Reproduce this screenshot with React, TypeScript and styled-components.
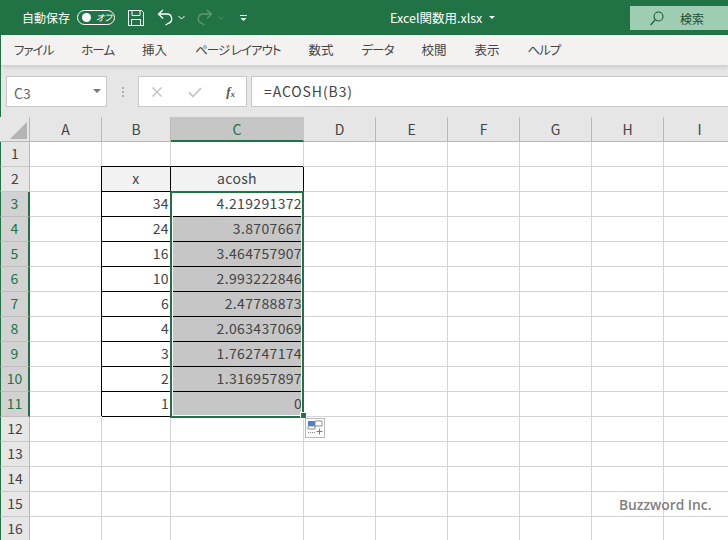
import React from 'react'
import styled, { createGlobalStyle } from 'styled-components'

const GlobalStyle = createGlobalStyle`
    html, body {
        margin: 0;
        padding: 0;
        overflow: hidden;
        background: #fff;
    }
`

const uiFont = `"Noto Sans CJK JP", "Noto Sans", sans-serif`

const columns = ['A', 'B', 'C', 'D', 'E', 'F', 'G', 'H', 'I']
const menus = [
    { label: 'ファイル', kana: true },
    { label: 'ホーム', kana: true },
    { label: '挿入', kana: false },
    { label: 'ページ レイアウト', kana: true },
    { label: '数式', kana: false },
    { label: 'データ', kana: true },
    { label: '校閲', kana: false },
    { label: '表示', kana: false },
    { label: 'ヘルプ', kana: true },
]
const values: [string, string][] = [
    ['34', '4.219291372'],
    ['24', '3.8707667'],
    ['16', '3.464757907'],
    ['10', '2.993222846'],
    ['6', '2.47788873'],
    ['4', '2.063437069'],
    ['3', '1.762747174'],
    ['2', '1.316957897'],
    ['1', '0'],
]

const cellText = (row: number, col: number) => {
    if (row === 2 && col === 1) return 'x'
    if (row === 2 && col === 2) return 'acosh'
    if (row >= 3 && row <= 11 && col === 1) return values[row - 3][0]
    if (row >= 3 && row <= 11 && col === 2) return values[row - 3][1]
    return ''
}

const App = () => {
    const rows = Array.from({ length: 16 }, (_, i) => i + 1)

    return (
        <Page>
            <GlobalStyle />
            <TitleBar>
                <AutoSave>自動保存</AutoSave>
                <Toggle>
                    <Knob />
                    <ToggleLabel>オフ</ToggleLabel>
                </Toggle>
                <QuickIcon width="16" height="16" viewBox="0 0 16 16" $left={13}>
                    <path d="M.5.5h13l2 2v13H.5zM4 .5v5h8v-5M3.500 15.500v-6h9v6" fill="none" stroke="#fff" />
                </QuickIcon>
                <QuickIcon width="16" height="17" viewBox="0 0 16 17" $left={13}>
                    <path d="M6 1 1.500 5 6 9.500M1.500 5H9.500a4.800 4.800 0 0 1 2 9.300L8.500 16" fill="none" stroke="#fff" strokeWidth="1.300" />
                </QuickIcon>
                <QuickIcon width="7" height="5" viewBox="0 0 7 5" $left={5}>
                    <path d="M.5 1 3.500 4l3-3" fill="none" stroke="#fff" />
                </QuickIcon>
                <QuickIcon width="16" height="17" viewBox="0 0 16 17" $left={12}>
                    <path d="M10 1l4.500 4L10 9.500M14.500 5H6.500a4.800 4.800 0 0 0-2 9.300L7.500 16" fill="none" stroke="#5b9a78" strokeWidth="1.300" />
                </QuickIcon>
                <QuickIcon width="6" height="4" viewBox="0 0 7 5" $left={5}>
                    <path d="M.5 1 3.500 4l3-3" fill="none" stroke="#5b9a78" />
                </QuickIcon>
                <QuickIcon width="7" height="6" viewBox="0 0 7 6" $left={16}>
                    <path d="M0 .5h7" stroke="#fff" />
                    <path d="M.5 3h6L3.500 6z" fill="#fff" />
                </QuickIcon>
                <FileName>
                    Excel関数用.xlsx
                    <Caret />
                </FileName>
                <SearchBox>
                    <svg width="14" height="15" viewBox="0 0 14 15">
                        <circle cx="8.500" cy="5.500" r="4.500" fill="none" stroke="#1d5a3a" strokeWidth="1.100" />
                        <path d="M5.200 8.800.6 14" fill="none" stroke="#1d5a3a" strokeWidth="1.200" />
                    </svg>
                    <SearchLabel>検索</SearchLabel>
                </SearchBox>
            </TitleBar>
            <MenuBar>
                {menus.map((m) => (
                    <MenuItem key={m.label} $kana={m.kana}>
                        {m.label}
                    </MenuItem>
                ))}
            </MenuBar>
            <FormulaBar>
                <NameBox>
                    C3
                    <NameCaret />
                </NameBox>
                <Grip>
                    <i />
                    <i />
                    <i />
                </Grip>
                <FxBox>
                    <svg width="14" height="14" viewBox="0 0 14 14">
                        <path d="M2.500 2.500l9 9M11.500 2.500l-9 9" stroke="#c4c4c4" strokeWidth="1.500" />
                    </svg>
                    <svg width="16" height="14" viewBox="0 0 16 14">
                        <path d="M2 7.500l4 4 8-8.500" fill="none" stroke="#c4c4c4" strokeWidth="1.800" />
                    </svg>
                    <FxLabel>
                        f<sub>x</sub>
                    </FxLabel>
                </FxBox>
                <FormulaInput>=ACOSH(B3)</FormulaInput>
            </FormulaBar>
            <SheetArea>
                <Sheet>
                    <Corner>
                        <svg width="17" height="17" viewBox="0 0 17 17">
                            <path d="M17 0v17H0z" fill="#b4b4b4" />
                        </svg>
                    </Corner>
                    {columns.map((c) => (
                        <ColHead key={c} $selected={c === 'C'}>
                            {c}
                        </ColHead>
                    ))}
                    {rows.map((row) => (
                        <React.Fragment key={row}>
                            <RowHead $selected={row >= 3 && row <= 11}>{row}</RowHead>
                            {columns.map((c, col) => {
                                const boxed = row >= 2 && row <= 11 && (col === 1 || col === 2)
                                return (
                                    <Cell
                                        key={c}
                                        $boxed={boxed}
                                        $head={boxed && row === 2}
                                        $filled={col === 2 && row >= 4 && row <= 11}
                                    >
                                        {cellText(row, col)}
                                    </Cell>
                                )
                            })}
                        </React.Fragment>
                    ))}
                </Sheet>
                <Selection />
                <FillHandle />
                <PasteOptions>
                    <svg width="18" height="18" viewBox="0 0 18 18">
                        <path d="M2 2h7v5H2z" fill="#4a7fd8" />
                        <path d="M9 2h7v5H9zM2 7h7v3H2z" fill="none" stroke="#8a8a8a" />
                        <path d="M2 13.500h8" stroke="#8a8a8a" strokeDasharray="1 1" />
                        <path d="M13.500 9.500v6M10.500 12.500h6" stroke="#7a7a7a" />
                    </svg>
                </PasteOptions>
                <Watermark>Buzzword Inc.</Watermark>
            </SheetArea>
        </Page>
    )
}

export default App

const Page = styled.div`
    width: 728px;
    height: 540px;
    overflow: hidden;
    display: flex;
    flex-direction: column;
    font-family: ${uiFont};
    background: #e6e6e6;
`

const TitleBar = styled.div`
    height: 35px;
    flex: none;
    display: flex;
    align-items: center;
    padding-left: 22px;
    background: #217346;
    color: #fff;
    position: relative;
`

const AutoSave = styled.span`
    font-size: 12px;
    width: 48px;
    white-space: nowrap;
`

const Toggle = styled.div`
    width: 38px;
    height: 15px;
    margin-left: 7px;
    box-sizing: border-box;
    border: 1px solid #fff;
    border-radius: 8px;
    display: flex;
    align-items: center;
    padding-left: 4px;
`

const Knob = styled.span`
    width: 9px;
    height: 9px;
    border-radius: 50%;
    background: #fff;
`

const ToggleLabel = styled.span`
    font-size: 9px;
    font-style: italic;
    margin-left: 5px;
    white-space: nowrap;
    font-feature-settings: 'palt';
`

const QuickIcon = styled.svg<{ $left: number }>`
    flex: none;
    margin-left: ${(p) => p.$left}px;
`

const FileName = styled.div`
    position: absolute;
    left: 390px;
    top: 0;
    height: 35px;
    display: flex;
    align-items: center;
    font-size: 12.500px;
    white-space: nowrap;
    font-feature-settings: 'palt';
`

const Caret = styled.span`
    margin-left: 7px;
    border-left: 3px solid transparent;
    border-right: 3px solid transparent;
    border-top: 3px solid #fff;
`

const SearchBox = styled.div`
    position: absolute;
    left: 630px;
    top: 6px;
    width: 98px;
    height: 24px;
    display: flex;
    align-items: center;
    padding-left: 20px;
    box-sizing: border-box;
    background: #9fcdb3;
`

const SearchLabel = styled.span`
    margin-left: 16px;
    font-size: 12px;
    color: #1d4d35;
`

const MenuBar = styled.div`
    height: 30px;
    flex: none;
    display: flex;
    align-items: center;
    gap: 28px;
    padding: 0 0 2px 13px;
    background: #f3f2f1;
    border-left: 1px solid #217346;
    box-sizing: border-box;
    box-shadow: 0 2px 4px rgba(0, 0, 0, 0.12);
    position: relative;
    z-index: 1;
`

const MenuItem = styled.span<{ $kana: boolean }>`
    font-size: 12.500px;
    color: #444;
    white-space: nowrap;
    font-feature-settings: 'palt';
    letter-spacing: ${(p) => (p.$kana ? '-1px' : '0')};
`

const FormulaBar = styled.div`
    height: 52px;
    flex: none;
    display: flex;
    align-items: flex-start;
    padding: 11px 0 0 5px;
    box-sizing: border-box;
    background: #e6e6e6;
    border-left: 1px solid #217346;
`

const NameBox = styled.div`
    width: 101px;
    height: 31px;
    box-sizing: border-box;
    background: #fff;
    border: 1px solid #c8c8c8;
    display: flex;
    align-items: center;
    justify-content: space-between;
    padding: 2px 5px 0 7px;
    font-size: 14px;
    color: #666;
`

const NameCaret = styled.span`
    margin-bottom: 4px;
    border-left: 4px solid transparent;
    border-right: 4px solid transparent;
    border-top: 4px solid #777;
`

const Grip = styled.div`
    width: 31px;
    height: 31px;
    flex: none;
    display: flex;
    flex-direction: column;
    align-items: center;
    justify-content: center;
    gap: 2px;

    i {
        width: 2px;
        height: 2px;
        background: #b0b0b0;
    }
`

const FxBox = styled.div`
    width: 109px;
    height: 31px;
    flex: none;
    box-sizing: border-box;
    background: #fff;
    border: 1px solid #c8c8c8;
    display: flex;
    align-items: center;
    justify-content: space-between;
    padding: 0 11px 0 11px;
`

const FxLabel = styled.span`
    font-family: 'Liberation Serif', serif;
    font-style: italic;
    font-weight: bold;
    font-size: 13px;
    color: #555;

    sub {
        font-size: 9px;
        vertical-align: -1px;
    }
`

const FormulaInput = styled.div`
    flex: 1;
    height: 31px;
    margin-left: 4px;
    box-sizing: border-box;
    background: #fff;
    border: 1px solid #c8c8c8;
    border-right: 0;
    display: flex;
    align-items: center;
    padding: 0 0 2px 12px;
    font-size: 14px;
    color: #444;
    letter-spacing: 0.9px;
`

const SheetArea = styled.div`
    position: relative;
    flex: 1;
    overflow: hidden;
    background: #fff;
`

const Sheet = styled.div`
    display: grid;
    grid-template-columns: 30px 72px 69px 133px 72px 72px 72px 72px 72px 72px;
    grid-template-rows: 25px repeat(16, 25px);
    font-size: 14px;
`

const Corner = styled.div`
    background: #e6e6e6;
    border-right: 1px solid #b8b8b8;
    border-bottom: 1px solid #b8b8b8;
    box-sizing: border-box;
    display: flex;
    align-items: flex-end;
    justify-content: flex-end;
    padding: 0 2px 2px 0;
`

const ColHead = styled.div<{ $selected?: boolean }>`
    box-sizing: border-box;
    display: flex;
    align-items: center;
    justify-content: center;
    background: ${(p) => (p.$selected ? '#c6c6c6' : '#e6e6e6')};
    color: ${(p) => (p.$selected ? '#217346' : '#444')};
    border-right: 1px solid ${(p) => (p.$selected ? '#c6c6c6' : '#b8b8b8')};
    border-bottom: ${(p) => (p.$selected ? '2px solid #217346' : '1px solid #b8b8b8')};
`

const RowHead = styled.div<{ $selected?: boolean }>`
    box-sizing: border-box;
    display: flex;
    align-items: center;
    justify-content: center;
    padding-bottom: 2px;
    background: ${(p) => (p.$selected ? '#d2d2d2' : '#e6e6e6')};
    color: ${(p) => (p.$selected ? '#217346' : '#444')};
    border-right: ${(p) => (p.$selected ? '2px solid #217346' : '1px solid #b8b8b8')};
    border-bottom: 1px solid ${(p) => (p.$selected ? '#bdbdbd' : '#c8c8c8')};
    border-left: 1px solid #217346;
`

const Cell = styled.div<{ $boxed?: boolean; $head?: boolean; $filled?: boolean }>`
    box-sizing: border-box;
    display: flex;
    align-items: center;
    justify-content: ${(p) => (p.$head ? 'center' : 'flex-end')};
    padding: 0 ${(p) => (p.$head ? '0' : '1px')} 2px 0;
    color: #444;
    letter-spacing: 0.35px;
    white-space: nowrap;
    background: ${(p) => (p.$filled ? '#c6c6c6' : p.$head ? '#f2f2f2' : '#fff')};
    border-right: 1px solid ${(p) => (p.$boxed ? '#000' : '#d4d4d4')};
    border-bottom: 1px solid ${(p) => (p.$boxed ? '#000' : '#d4d4d4')};
    box-shadow: ${(p) => (p.$boxed ? '-1px -1px 0 #000' : 'none')};
`

const Selection = styled.div`
    position: absolute;
    left: 170px;
    top: 74px;
    width: 134px;
    height: 227px;
    box-sizing: border-box;
    border: 2px solid #217346;
    box-shadow: inset 0 0 0 1px #fff;
    pointer-events: none;
`

const FillHandle = styled.div`
    position: absolute;
    left: 300px;
    top: 295px;
    width: 5px;
    height: 5px;
    background: #217346;
    border: 1px solid #fff;
    box-sizing: content-box;
`

const PasteOptions = styled.div`
    position: absolute;
    left: 305px;
    top: 301px;
    width: 20px;
    height: 20px;
    box-sizing: border-box;
    background: #fff;
    border: 1px solid #b8b8b8;
    display: flex;
    align-items: center;
    justify-content: center;
`

const Watermark = styled.div`
    position: absolute;
    left: 619px;
    top: 378px;
    font-family: 'Open Sans', sans-serif;
    font-weight: 600;
    font-size: 13.800px;
    color: #808080;
    white-space: nowrap;
`
